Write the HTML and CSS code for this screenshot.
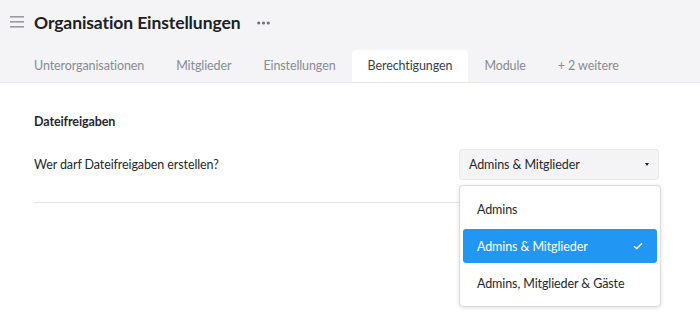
FILE: index.html
```html
<!DOCTYPE html>
<html lang="de">
<head>
  <meta charset="UTF-8">
  <title>Organisation Einstellungen</title>
  <link rel="stylesheet" href="styles.css">
</head>
<body>

<div class="header">
  <div class="title-row">
    <svg class="burger" width="14" height="12" viewBox="0 0 14 12">
      <rect x="0" y="0" width="14" height="1.6" fill="#9a9a9f"/>
      <rect x="0" y="5" width="14" height="1.6" fill="#9a9a9f"/>
      <rect x="0" y="10" width="14" height="1.6" fill="#9a9a9f"/>
    </svg>
    <h1>Organisation Einstellungen</h1>
    <svg class="more" width="13" height="4" viewBox="0 0 13 4">
      <circle cx="1.7" cy="2" r="1.6" fill="#6f737a"/>
      <circle cx="6.5" cy="2" r="1.6" fill="#6f737a"/>
      <circle cx="11.3" cy="2" r="1.6" fill="#6f737a"/>
    </svg>
  </div>
  <div class="tabs">
    <span class="tab">Unterorganisationen</span>
    <span class="tab">Mitglieder</span>
    <span class="tab">Einstellungen</span>
    <span class="tab active">Berechtigungen</span>
    <span class="tab">Module</span>
    <span class="tab">+ 2 weitere</span>
  </div>
</div>

<div class="content">
  <h3>Dateifreigaben</h3>
  <div class="setting">
    <span>Wer darf Dateifreigaben erstellen?</span>
    <div class="select-wrap">
      <div class="select">
        <span>Admins &amp; Mitglieder</span>
        <span class="caret"></span>
      </div>
      <ul class="menu">
        <li>Admins</li>
        <li class="selected">Admins &amp; Mitglieder
          <svg width="10" height="8" viewBox="0 0 10 8"><path d="M1 4.2 L3.8 6.6 L9 1.2" fill="none" stroke="#fff" stroke-width="1.4"/></svg>
        </li>
        <li>Admins, Mitglieder &amp; Gäste</li>
      </ul>
    </div>
  </div>
  <hr>
</div>

</body>
</html>
```

FILE: styles.css
```css
:root {
  --head-bg: #f4f4f6;
  --text: #24282e;
  --muted: #878b93;
  --line: #e6e6ea;
  --blue: #2196f3;
}

html, body {
  min-height: 100%;
  height: 100%;
}

body {
  margin: 0;
  font-family: Lato, "Noto Sans", sans-serif;
  font-size: 12.5px;
  letter-spacing: -0.1px;
  color: var(--text);
  background: #fff;
}

.header {
  background: var(--head-bg);
  border-bottom: 1px solid var(--line);
}

.title-row {
  display: flex;
  align-items: center;
  height: 44px;
  padding-left: 10px;
}

.burger {
  margin-right: 10px;
}

h1 {
  margin: 0;
  font-size: 17.5px;
  font-weight: bold;
  color: #1c2027;
}

.more {
  margin-left: 17px;
  margin-top: 2px;
}

.tabs {
  display: flex;
  padding-left: 18px;
  margin-top: 6px;
}

.tab {
  padding: 0 16px;
  height: 32px;
  line-height: 32px;
  color: var(--muted);
  border-radius: 4px 4px 0 0;
}

.tab.active {
  background: #fff;
  color: #3a3f47;
}

.content {
  padding: 0 41px 0 34px;
}

h3 {
  margin: 31px 0 0;
  font-size: 12.5px;
  font-weight: bold;
}

.setting {
  display: flex;
  justify-content: space-between;
  align-items: center;
  margin-top: 20px;
}

.select-wrap {
  position: relative;
  width: 200px;
}

.select {
  display: flex;
  justify-content: space-between;
  align-items: center;
  height: 29px;
  padding: 0 9px;
  background: var(--head-bg);
  border: 1px solid #ebebee;
  border-radius: 3px;
}

.caret {
  width: 0;
  height: 0;
  border-left: 2.5px solid transparent;
  border-right: 2.5px solid transparent;
  border-top: 3px solid #222;
}

.menu {
  position: absolute;
  top: 36px;
  left: 0;
  width: 202px;
  box-sizing: border-box;
  margin: 0;
  padding: 3px;
  list-style: none;
  background: #fff;
  border: 1px solid #dcdce0;
  border-radius: 4px;
  box-shadow: 0 1px 4px rgba(0, 0, 0, 0.12);
}

.menu li {
  display: flex;
  justify-content: space-between;
  align-items: center;
  height: 34px;
  padding: 0 14px 0 14px;
  margin: 3px 0;
  border-radius: 3px;
}

.menu li.selected {
  background: var(--blue);
  color: #fff;
}

hr {
  border: none;
  border-top: 1px solid var(--line);
  margin: 22px 0 0;
}
```
